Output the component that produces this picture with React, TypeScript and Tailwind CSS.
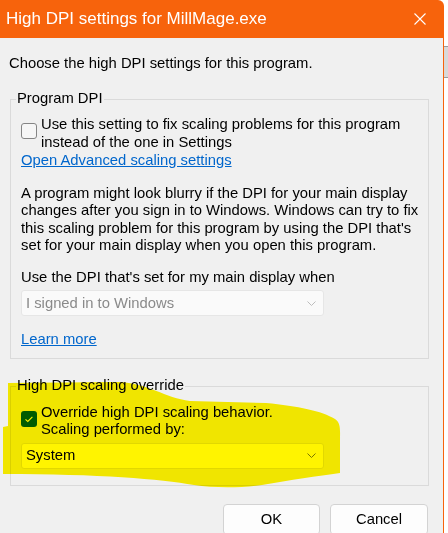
import React from "react";

function Chevron({ color }: { color: string }) {
  return (
    <svg width="9" height="5" viewBox="0 0 9 5" className="shrink-0">
      <path d="M0.5 0.5 L4.5 4.5 L8.5 0.5" fill="none" stroke={color} strokeWidth="1" />
    </svg>
  );
}

export default function App() {
  return (
    <div className="relative w-[448px] h-[533px] overflow-hidden bg-white font-['Liberation_Sans',Arial,sans-serif] text-[14.8px] text-black">
      <div className="flex h-full">
        <div className="w-[444px] h-full flex flex-col">
          <div className="h-[38px] shrink-0 bg-[#f7630c] rounded-tr-[6px] flex items-center justify-between pl-[6px] pr-[18px] text-white">
            <span className="text-[17px] leading-[20px] whitespace-nowrap">High DPI settings for MillMage.exe</span>
            <svg width="12" height="12" viewBox="0 0 12 12" className="mb-[1px]">
              <path d="M0.5 0.5 L11.5 11.5 M11.5 0.5 L0.5 11.5" stroke="white" strokeWidth="1.1" fill="none" />
            </svg>
          </div>
          <div className="flex-1 bg-[#f0f0f0] border-r border-[#f7630c] flex flex-col">
            <p className="mt-[17px] ml-[9px] leading-[17.5px] whitespace-nowrap">
              Choose the high DPI settings for this program.
            </p>

            <div className="relative mt-[26px] ml-[10px] w-[419px] h-[260px] border border-[#dadada] pt-[15px] pl-[10px] flex flex-col">
              <span className="absolute left-[5px] -top-[10px] px-[1px] bg-[#f0f0f0] leading-[17.5px] whitespace-nowrap">
                Program DPI
              </span>
              <div className="flex items-start gap-[4px]">
                <span className="mt-[8px] w-[16px] h-[16px] shrink-0 rounded-[3px] border border-[#858585] bg-[#f6f6f6]" />
                <div className="leading-[18px] whitespace-nowrap">
                  Use this setting to fix scaling problems for this program
                  <br />
                  instead of the one in Settings
                </div>
              </div>
              <span className="leading-[18px] text-[#0066cc] underline whitespace-nowrap self-start">
                Open Advanced scaling settings
              </span>
              <p className="mt-[16px] leading-[17.5px] whitespace-nowrap">
                A program might look blurry if the DPI for your main display
                <br />
                changes after you sign in to Windows. Windows can try to fix
                <br />
                this scaling problem for this program by using the DPI that's
                <br />
                set for your main display when you open this program.
              </p>
              <p className="mt-[14px] leading-[17.5px] whitespace-nowrap">
                Use the DPI that's set for my main display when
              </p>
              <div className="mt-[4px] w-[303px] h-[26px] rounded-[3px] border border-[#e6e6e6] bg-[#fafafa] flex items-center justify-between pl-[4px] pr-[7px] text-[#8a8a8a]">
                <span className="whitespace-nowrap">I signed in to Windows</span>
                <Chevron color="#bdbdbd" />
              </div>
              <span className="mt-[15px] leading-[17.5px] text-[#0066cc] underline whitespace-nowrap self-start">
                Learn more
              </span>
            </div>

            <div className="relative mt-[27px] ml-[10px] w-[419px] h-[100px] border border-[#dadada] pt-[17px] pl-[10px] flex flex-col">
              <span className="absolute left-[5px] -top-[10px] px-[1px] bg-[#f0f0f0] leading-[17.5px] whitespace-nowrap">
                High DPI scaling override
              </span>
              <div className="flex items-start gap-[4px]">
                <span className="mt-[7px] w-[16px] h-[16px] shrink-0 rounded-[3px] bg-[#005fb8] flex items-center justify-center">
                  <svg width="16" height="16" viewBox="0 0 16 16">
                    <path d="M4.5 8.3 L6.8 10.4 L11.4 5.8" fill="none" stroke="white" strokeWidth="1.1" />
                  </svg>
                </span>
                <div className="leading-[17.5px] whitespace-nowrap">
                  Override high DPI scaling behavior.
                  <br />
                  Scaling performed by:
                </div>
              </div>
              <div className="mt-[4px] w-[303px] h-[26px] rounded-[3px] border border-[#e2e2e2] bg-white flex items-center justify-between pl-[4px] pr-[7px]">
                <span className="whitespace-nowrap">System</span>
                <Chevron color="#7a7a7a" />
              </div>
            </div>

            <div className="mt-[18px] mr-[15px] flex justify-end gap-[10px]">
              <div className="w-[97px] h-[31px] rounded-[4px] border border-[#d3d3d3] bg-[#fdfdfd] flex items-center justify-center">
                OK
              </div>
              <div className="w-[98px] h-[31px] rounded-[4px] border border-[#d3d3d3] bg-[#fdfdfd] flex items-center justify-center">
                Cancel
              </div>
            </div>
          </div>
        </div>
        <div className="flex-1 flex flex-col">
          <div className="h-[46px]" />
          <div className="h-[32px] bg-[#d9d9d9] border-y border-[#9a9a9a]" />
        </div>
      </div>

      <svg
        width="448"
        height="533"
        viewBox="0 0 448 533"
        className="absolute left-0 top-0 pointer-events-none mix-blend-multiply"
      >
        <path
          d="M8 383 L118 382 C148 383 165 398 190 401 L266 403 C298 406 322 411 335 419 C341 423 340 430 340 440 L340 473 C318 476 290 480 262 485 C240 488 214 488 194 485 C160 479 100 474 3 474 L3 427 L8 426 Z"
          fill="#fff400"
        />
      </svg>
    </div>
  );
}
